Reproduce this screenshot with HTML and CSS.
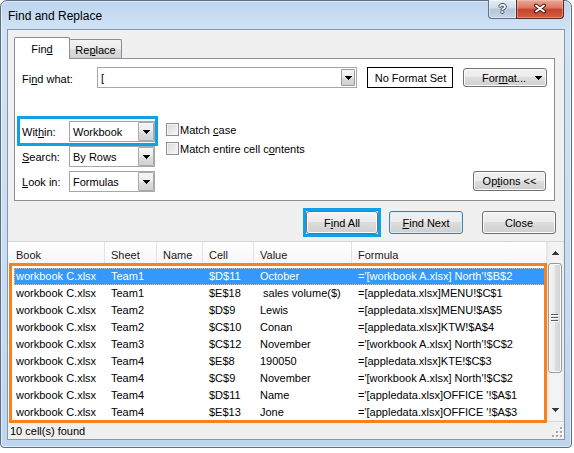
FILE: index.html
```html
<!DOCTYPE html>
<html>
<head>
<meta charset="utf-8">
<title>Find and Replace</title>
<link rel="stylesheet" href="styles.css">
</head>
<body>
<div class="window">
  <div class="titlebar">
    <span class="title">Find and Replace</span>
    <div class="caption">
      <span class="cap-help">?</span>
      <span class="cap-close">
        <svg width="14" height="11" viewBox="0 0 14 11"><path d="M3 2.5L11 8.5M11 2.5L3 8.5" stroke="#3b1c16" stroke-width="4" stroke-linecap="round"/><path d="M3 2.5L11 8.5M11 2.5L3 8.5" stroke="#ffffff" stroke-width="2" stroke-linecap="round"/></svg>
      </span>
    </div>
  </div>
  <div class="client">
    <div class="tabs">
      <div class="tab active">Fin<u>d</u></div>
      <div class="tab">Re<u>p</u>lace</div>
    </div>
    <div class="panel">
      <div class="find-row">
        <span class="lbl-find">Fi<u>n</u>d what:</span>
        <div class="combo">
          <span class="combo-text">[</span>
          <span class="drop"><svg class="tri" width="7" height="4" viewBox="0 0 7 4"><path d="M0 0h7v1h-1v1h-1v1h-1v1h-1v-1h-1v-1h-1v-1h-1z"/></svg></span>
        </div>
        <div class="noformat">No Format Set</div>
        <div class="btn fmt">For<u>m</u>at...<svg class="tri fmt-tri" width="7" height="4" viewBox="0 0 7 4"><path d="M0 0h7v1h-1v1h-1v1h-1v1h-1v-1h-1v-1h-1v-1h-1z"/></svg></div>
      </div>
      <div class="opts">
        <div class="selects">
          <div class="sel-row within">
            <span class="sel-lbl">Wit<u>h</u>in:</span>
            <div class="select"><span class="sel-text">Workbook</span><span class="sel-btn"><svg class="tri" width="7" height="4" viewBox="0 0 7 4"><path d="M0 0h7v1h-1v1h-1v1h-1v1h-1v-1h-1v-1h-1v-1h-1z"/></svg></span></div>
          </div>
          <div class="sel-row">
            <span class="sel-lbl"><u>S</u>earch:</span>
            <div class="select"><span class="sel-text">By Rows</span><span class="sel-btn"><svg class="tri" width="7" height="4" viewBox="0 0 7 4"><path d="M0 0h7v1h-1v1h-1v1h-1v1h-1v-1h-1v-1h-1v-1h-1z"/></svg></span></div>
          </div>
          <div class="sel-row">
            <span class="sel-lbl"><u>L</u>ook in:</span>
            <div class="select"><span class="sel-text">Formulas</span><span class="sel-btn"><svg class="tri" width="7" height="4" viewBox="0 0 7 4"><path d="M0 0h7v1h-1v1h-1v1h-1v1h-1v-1h-1v-1h-1v-1h-1z"/></svg></span></div>
          </div>
        </div>
        <div class="checks">
          <div class="check-row"><span class="checkbox"></span><span>Match <u>c</u>ase</span></div>
          <div class="check-row"><span class="checkbox"></span><span>Match entire cell c<u>o</u>ntents</span></div>
        </div>
        <div class="btn options">Op<u>t</u>ions &lt;&lt;</div>
      </div>
    </div>
    <div class="actions">
      <span class="hl-btn"><span class="btn act">F<u>i</u>nd All</span></span>
      <span class="btn act default"><u>F</u>ind Next</span>
      <span class="btn act">Close</span>
    </div>
    <div class="results">
      <div class="list">
        <div class="list-main">
          <div class="header">
            <span class="hcell first">Book</span>
            <span class="hcell">Sheet</span>
            <span class="hcell">Name</span>
            <span class="hcell">Cell</span>
            <span class="hcell">Value</span>
            <span class="hcell">Formula</span>
          </div>
          <div class="rows">
            <div class="row selected"><span>workbook C.xlsx</span><span>Team1</span><span></span><span>$D$11</span><span>October</span><span>='[workbook A.xlsx] North'!$B$2</span></div>
            <div class="row"><span>workbook C.xlsx</span><span>Team1</span><span></span><span>$E$18</span><span> sales volume($)</span><span>=[appledata.xlsx]MENU!$C$1</span></div>
            <div class="row"><span>workbook C.xlsx</span><span>Team2</span><span></span><span>$D$9</span><span>Lewis</span><span>=[appledata.xlsx]MENU!$A$5</span></div>
            <div class="row"><span>workbook C.xlsx</span><span>Team2</span><span></span><span>$C$10</span><span>Conan</span><span>=[appledata.xlsx]KTW!$A$4</span></div>
            <div class="row"><span>workbook C.xlsx</span><span>Team3</span><span></span><span>$C$12</span><span>November</span><span>='[workbook A.xlsx] North'!$C$2</span></div>
            <div class="row"><span>workbook C.xlsx</span><span>Team4</span><span></span><span>$E$8</span><span>190050</span><span>=[appledata.xlsx]KTE!$C$3</span></div>
            <div class="row"><span>workbook C.xlsx</span><span>Team4</span><span></span><span>$C$9</span><span>November</span><span>='[workbook A.xlsx] North'!$C$2</span></div>
            <div class="row"><span>workbook C.xlsx</span><span>Team4</span><span></span><span>$D$11</span><span>Name</span><span>='[appledata.xlsx]OFFICE '!$A$1</span></div>
            <div class="row"><span>workbook C.xlsx</span><span>Team4</span><span></span><span>$E$13</span><span>Jone</span><span>='[appledata.xlsx]OFFICE '!$A$3</span></div>
          </div>
        </div>
        <div class="scrollbar">
          <div class="sb-btn"><svg width="7" height="4" viewBox="0 0 7 4"><path d="M3 0h1v1h1v1h1v1h1v1h-7v-1h1v-1h1v-1h1z"/></svg></div>
          <div class="sb-thumb"><svg width="8" height="8" viewBox="0 0 8 8"><path d="M0 0.5h7M0 3.5h7M0 6.5h7" stroke="#5c5c5c" stroke-width="1"/><path d="M1 1.5h7M1 4.5h7M1 7.5h7" stroke="#ffffff" stroke-width="1"/></svg></div>
          <div class="sb-track"></div>
          <div class="sb-btn down"><svg width="7" height="4" viewBox="0 0 7 4"><path d="M0 0h7v1h-1v1h-1v1h-1v1h-1v-1h-1v-1h-1v-1h-1z"/></svg></div>
        </div>
      </div>
      <div class="status">
        <span class="status-text">10 cell(s) found</span>
        <svg class="grip" width="12" height="12" viewBox="0 0 12 12">
          <g fill="#ffffff"><rect x="10" y="2" width="2" height="2"/><rect x="10" y="6" width="2" height="2"/><rect x="6" y="6" width="2" height="2"/><rect x="10" y="10" width="2" height="2"/><rect x="6" y="10" width="2" height="2"/><rect x="2" y="10" width="2" height="2"/></g>
          <g fill="#a8a8a8"><rect x="9" y="1" width="2" height="2"/><rect x="9" y="5" width="2" height="2"/><rect x="5" y="5" width="2" height="2"/><rect x="9" y="9" width="2" height="2"/><rect x="5" y="9" width="2" height="2"/><rect x="1" y="9" width="2" height="2"/></g>
        </svg>
      </div>
      <div class="hl-orange"></div>
    </div>
  </div>
</div>
</body>
</html>
```

FILE: styles.css
```css
*, *::before, *::after { box-sizing: border-box; }
html, body { margin: 0; padding: 0; }
body {
  width: 574px;
  height: 453px;
  overflow: hidden;
  background: #ffffff;
  font-family: "Liberation Sans", Arial, sans-serif;
  font-size: 11px;
  color: #000;
}
u { text-decoration: underline; text-underline-offset: 1px; }

.window {
  width: 572px;
  height: 448px;
  border: 1px solid #5d6e83;
  border-radius: 7px 7px 4px 4px;
  background: linear-gradient(#bcd5ef 0, #d1e3f5 28px, #c9dcf1 60%, #bfd5ee 100%);
  box-shadow: inset 0 0 0 1px rgba(255,255,255,0.55);
  padding: 0 6px 7px 6px;
  display: flex;
  flex-direction: column;
}

.titlebar {
  height: 28px;
  display: flex;
  justify-content: space-between;
  align-items: flex-start;
}
.title {
  font-size: 12px;
  line-height: 14px;
  padding: 8px 0 0 1px;
  color: #000;
}
.caption { display: flex; margin-top: -1px; margin-right: 1px; }
.cap-help {
  width: 28px;
  height: 19px;
  border: 1px solid #5f7086;
  border-top: none;
  border-right: none;
  border-radius: 0 0 0 4px;
  background: linear-gradient(#e4edf7 0%, #cfdcea 45%, #b4c6da 50%, #c4d5e7 100%);
  box-shadow: inset 0 0 0 1px rgba(255,255,255,0.45);
  color: #ffffff;
  font-weight: bold;
  font-size: 13px;
  line-height: 18px;
  text-align: center;
  text-shadow: 1px 0 0 #3d4b5c, -1px 0 0 #3d4b5c, 0 1px 0 #3d4b5c, 0 -1px 0 #3d4b5c;
}
.cap-close {
  width: 48px;
  height: 19px;
  border: 1px solid #5a2a22;
  border-top: none;
  border-radius: 0 0 4px 0;
  background: linear-gradient(#eaa997 0%, #d9765f 45%, #c8432b 52%, #d35c41 100%);
  box-shadow: inset 0 0 0 1px rgba(255,210,200,0.4);
  display: flex;
  align-items: center;
  justify-content: center;
  padding-bottom: 1px;
}

.client {
  flex: 1;
  background: #f0f0f0;
  border: 1px solid #8397ad;
  display: flex;
  flex-direction: column;
  min-height: 0;
}

/* tabs */
.tabs {
  display: flex;
  align-items: flex-end;
  height: 21px;
  margin: 7px 0 0 6px;
}
.tab {
  height: 19px;
  border: 1px solid #898c95;
  border-bottom: none;
  border-radius: 2px 2px 0 0;
  background: linear-gradient(#f3f3f3 0%, #ebebeb 50%, #dddddd 51%, #d2d2d2 100%);
  display: flex;
  align-items: center;
  justify-content: center;
  padding-top: 1px;
  width: 53px;
  margin-left: -1px;
}
.tab.active {
  width: 56px;
  height: 22px;
  margin-left: 0;
  margin-bottom: -1px;
  background: #ffffff;
  position: relative;
  z-index: 1;
  padding-top: 0;
}

.panel {
  margin-left: 6px;
  width: 541px;
  height: 143px;
  border: 1px solid #898c95;
  background: #ffffff;
}
.find-row {
  display: flex;
  align-items: center;
  height: 21px;
  margin-top: 8px;
  padding-left: 7px;
}
.lbl-find { width: 75px; padding-top: 2px; }
.combo {
  width: 260px;
  height: 21px;
  border: 1px solid #a5a7ab;
  background: #fff;
  display: flex;
  align-items: center;
}
.combo-text { flex: 1; padding-left: 3px; }
.drop {
  width: 14px;
  height: 17px;
  margin-right: 1px;
  border: 1px solid #9a9a9a;
  border-radius: 1px;
  background: linear-gradient(#f7f7f7, #e9e9e9 50%, #dcdcdc 51%, #cfcfcf);
  display: flex;
  align-items: center;
  justify-content: center;
}
.tri { display: block; shape-rendering: crispEdges; fill: #000; }
.noformat {
  margin-left: 10px;
  width: 86px;
  height: 21px;
  border: 1px solid #000;
  display: flex;
  align-items: center;
  justify-content: center;
  padding-left: 1px;
}
.btn {
  border: 1px solid #707070;
  border-radius: 3px;
  background: linear-gradient(#f2f2f2 0%, #ebebeb 49%, #dddddd 50%, #cfcfcf 100%);
  box-shadow: inset 0 0 0 1px #fbfbfb;
  display: flex;
  align-items: center;
  justify-content: center;
}
.fmt {
  margin-left: 10px;
  width: 84px;
  height: 19px;
  justify-content: flex-start;
  padding-left: 18px;
}
.fmt-tri { margin-left: auto; margin-right: 4px; }

.opts {
  display: flex;
  margin-top: 33px;
  padding: 0 8px 0 7px;
  height: 71px;
}
.selects { display: flex; flex-direction: column; gap: 4px; }
.sel-row { display: flex; align-items: center; height: 21px; position: relative; }
.sel-lbl { width: 47px; }
.select {
  width: 86px;
  height: 21px;
  border: 1px solid #a5a7ab;
  background: #fff;
  display: flex;
  align-items: stretch;
}
.sel-text { flex: 1; padding-left: 3px; display: flex; align-items: center; }
.sel-btn {
  width: 16px;
  border: 1px solid #a9a9a9;
  border-radius: 1px;
  background: linear-gradient(#f7f7f7, #ebebeb 50%, #dedede 51%, #d2d2d2);
  display: flex;
  align-items: center;
  justify-content: center;
}
.within::after {
  content: "";
  position: absolute;
  left: -5px;
  top: -5px;
  width: 141px;
  height: 30px;
  border: 3px solid #10a1e5;
}
.checks {
  margin-left: 11px;
  margin-top: -1px;
  display: flex;
  flex-direction: column;
}
.check-row { display: flex; align-items: center; height: 19px; }
.checkbox {
  width: 13px;
  height: 13px;
  margin-right: 1px;
  border: 1px solid #8e8f8f;
  background: linear-gradient(135deg, #d8d8d8, #f8f8f8);
  box-shadow: inset 0 0 0 1px #f4f4f4;
}
.options {
  margin-left: auto;
  align-self: flex-end;
  margin-bottom: 1px;
  width: 73px;
  height: 20px;
}

/* action buttons */
.actions {
  display: flex;
  justify-content: flex-end;
  margin-top: 10px;
  padding-right: 8px;
}
.act { width: 74px; height: 23px; }
.hl-btn { position: relative; margin-right: 11px; }
.hl-btn .act { width: 72px; }
.hl-btn::after {
  content: "";
  position: absolute;
  left: -3px;
  top: -3px;
  right: -3px;
  bottom: -3px;
  border: 3px solid #10a1e5;
}
.default {
  margin-right: 19px;
  border-color: #3c7fb1;
  box-shadow: inset 0 0 0 1px #d6effc;
}

/* results */
.results {
  margin-top: 7px;
  flex: 1;
  display: flex;
  flex-direction: column;
  position: relative;
  min-height: 0;
}
.list {
  height: 180px;
  display: flex;
  border-top: 1px solid #d4d4d4;
  background: #ffffff;
}
.list-main { flex: 1; overflow: hidden; }
.header {
  display: grid;
  grid-template-columns: 97px 52px 46px 51px 98px 1fr;
  height: 21px;
  background: linear-gradient(#ffffff, #f6f7f9);
}
.hcell {
  border-right: 1px solid #e3e4e7;
  padding: 6px 0 0 6px;
  line-height: 14px;
  color: #1a1a1a;
  white-space: nowrap;
}
.hcell.first { padding-left: 8px; }
.hcell:last-child { border-right: none; }
.rows { padding-top: 5px; }
.row {
  display: grid;
  grid-template-columns: 91px 52px 46px 51px 98px 1fr;
  height: 17px;
  line-height: 17px;
  margin: 0 1px 0 6px;
}
.row span {
  padding-left: 6px;
  white-space: pre;
  overflow: hidden;
}
.row span:first-child { padding-left: 2px; }
.row.selected {
  background: #3399ff;
  color: #ffffff;
  outline: 1px dotted #f3c27a;
  outline-offset: -1px;
}

.scrollbar {
  width: 18px;
  display: flex;
  flex-direction: column;
  background: linear-gradient(90deg, #e6e6e6 0, #f3f3f3 3px, #f3f3f3 14px, #ebebeb 100%);
  border-left: 1px solid #e8e8e8;
}
.sb-btn {
  height: 21px;
  display: flex;
  align-items: center;
  justify-content: center;
  padding-top: 1px;
}
.sb-btn svg { display: block; shape-rendering: crispEdges; fill: #3a3a3a; }
.sb-btn.down { padding-top: 0; padding-bottom: 1px; }
.sb-thumb {
  height: 110px;
  margin: 0 2px 0 1px;
  border: 1px solid #9a9a9a;
  border-radius: 3px;
  background: linear-gradient(90deg, #f4f4f4 0%, #ececec 45%, #dcdcdc 55%, #d3d3d3 100%);
  box-shadow: inset 0 0 0 1px #fafafa;
  display: flex;
  align-items: center;
  justify-content: center;
}
.sb-thumb svg { display: block; shape-rendering: crispEdges; }
.sb-track { flex: 1; }

.status {
  flex: 1;
  display: flex;
  align-items: center;
  justify-content: space-between;
  padding: 1px 0 0 2px;
  background: #f0f0f0;
  border-top: 1px solid #d7d7d7;
}
.grip { align-self: flex-end; margin: 0 1px 1px 0; display: block; }

.hl-orange {
  position: absolute;
  left: 1px;
  top: 22px;
  width: 538px;
  height: 160px;
  border: 3px solid #f5821f;
  pointer-events: none;
}
```
